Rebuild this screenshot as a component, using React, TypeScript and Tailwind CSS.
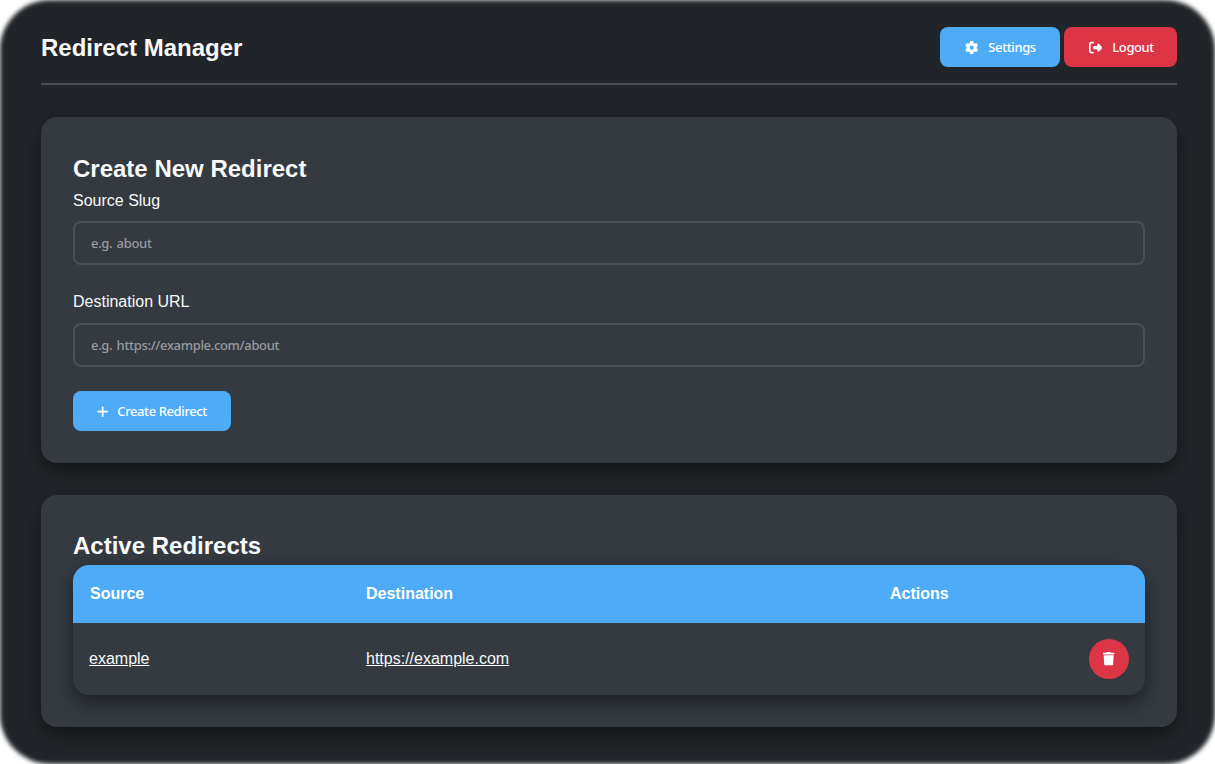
import type { ReactNode } from "react";
import { FaGear, FaPlus, FaRightFromBracket, FaTrash } from "react-icons/fa6";

const uiFont = "font-['Noto_Sans',sans-serif] text-[13px] font-medium";

function Button({ color, width, icon, children }: { color: string; width: string; icon: ReactNode; children: ReactNode }) {
  return (
    <button className={`flex h-10 items-center gap-[11px] rounded-lg pt-0.5 pl-6 tracking-[-0.4px] whitespace-nowrap text-white ${uiFont} ${color} ${width}`}>
      {icon}
      <span>{children}</span>
    </button>
  );
}

function Field({ label, labelHeight, placeholder }: { label: string; labelHeight: string; placeholder: string }) {
  return (
    <label className="mb-6 block">
      <span className={`mb-2 block leading-[25px] ${labelHeight}`}>{label}</span>
      <input
        className={`block h-11 w-full rounded-lg border-2 border-[#495057] bg-transparent px-4 tracking-[-0.33px] [word-spacing:1.3px] text-white placeholder:text-[#999b9f] ${uiFont}`}
        placeholder={placeholder}
      />
    </label>
  );
}

const shadow = "shadow-[0_8px_20px_rgba(0,0,0,0.45)]";
const cardClass = `rounded-2xl bg-[#343a40] px-8 ${shadow}`;

export default function App() {
  return (
    <div className="relative isolate h-[764px] w-[1215px] overflow-hidden bg-white font-['Liberation_Sans',Arial,sans-serif] text-base text-[#f8f9fa]">
      <div className="absolute inset-0 -z-10 rounded-[50px] bg-[#212529] blur-[2px]" />
      <div className="flex flex-col pr-[38px] pl-[41px]">
        <header className="flex h-[85px] items-start justify-between border-b-2 border-[#495057] pt-[27px]">
          <h1 className="pt-px text-2xl leading-10 font-bold">Redirect Manager</h1>
          <div className="flex gap-1">
            <Button color="bg-[#4dabf7]" width="w-[120px]" icon={<FaGear className="-mr-px mb-px ml-px size-[13.33px]" />}>Settings</Button>
            <Button color="bg-[#dc3545]" width="w-[113px]" icon={<FaRightFromBracket className="-mr-px mb-px ml-px size-[13.33px]" />}>Logout</Button>
          </div>
        </header>

        <section className={`mt-8 h-[346px] pt-8 ${cardClass}`}>
          <h2 className="h-[39px] text-2xl leading-[39px] font-bold">Create New Redirect</h2>
          <Field label="Source Slug" labelHeight="h-[25px]" placeholder="e.g. about" />
          <Field label="Destination URL" labelHeight="h-[26px]" placeholder="e.g. https://example.com/about" />
          <Button color="bg-[#4dabf7]" width="w-[158px]" icon={<FaPlus className="-mr-[3px] mb-px -ml-px size-[13.33px]" />}>Create Redirect</Button>
        </section>

        <section className={`mt-8 h-[232px] pt-8 ${cardClass}`}>
          <h2 className="h-[38px] text-2xl leading-[38px] font-bold">Active Redirects</h2>
          <div className={`h-[130px] overflow-hidden rounded-2xl bg-[#343a40] ${shadow}`}>
            <div className="grid h-[58px] grid-cols-[276px_524px_1fr] items-center bg-[#4dabf7] pr-4 pl-[17px] font-bold text-white">
              <span>Source</span>
              <span>Destination</span>
              <span>Actions</span>
            </div>
            <div className="grid h-[72px] grid-cols-[277px_523px_1fr] items-center px-4">
              <a className="underline">example</a>
              <a className="underline">https://example.com</a>
              <button className="flex size-10 items-center justify-center justify-self-end rounded-full bg-[#dc3545] text-white" aria-label="Delete">
                <FaTrash className="size-[13.33px]" />
              </button>
            </div>
          </div>
        </section>
      </div>
    </div>
  );
}
